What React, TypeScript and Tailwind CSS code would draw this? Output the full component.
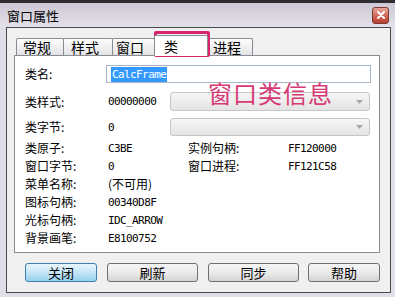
import React from "react";

const Arrow = () => (
  <svg width="7" height="4" viewBox="0 0 7 4" className="absolute right-[6px] top-1/2 -translate-y-1/2">
    <path d="M0 0 H7 L3.5 4 Z" fill="#a8a8a8" />
  </svg>
);

const Combo = () => (
  <div className="relative w-[200px] h-full rounded-[3px] border border-[#c6c6c6] bg-gradient-to-b from-[#f6f6f6] to-[#e4e4e4]">
    <Arrow />
  </div>
);

const mono = "font-['DejaVu_Sans_Mono',monospace] text-[11px] tracking-[-0.6px] leading-none";

const Row = ({ label, value, label2, value2, cjkValue }: { label: string; value: string; label2?: string; value2?: string; cjkValue?: boolean }) => (
  <div className="h-[18px] flex items-center">
    <div className="w-[81px] text-[12px] leading-none">{label}</div>
    <div className={`w-[82px] pl-[2px] ${cjkValue ? "text-[12px] leading-none" : mono}`}>{value}</div>
    {label2 && <div className="w-[100px] text-[12px] leading-none">{label2}</div>}
    {value2 && <div className={mono}>{value2}</div>}
  </div>
);

const Tab = ({ w, pl, children }: { w: string; pl: string; children: React.ReactNode }) => (
  <div className={`${w} ${pl} h-[17px] flex items-center text-[14px] leading-none border border-b-0 border-[#898c95] rounded-t-[2px] bg-gradient-to-b from-[#fdfdfd] to-[#e3e3e3] -mr-px`}>
    {children}
  </div>
);

const Btn = ({ w, ml, children, def }: { w: string; ml?: string; children: React.ReactNode; def?: boolean }) => (
  <div
    className={`${w} ${ml ?? ""} h-[19px] rounded-[3px] border flex items-center justify-center text-[13px] leading-none ${
      def
        ? "border-[#3c7fb1] bg-gradient-to-b from-[#e8f6fd] via-[#c4e5f6] to-[#98d1ef]"
        : "border-[#707070] bg-gradient-to-b from-[#f4f4f4] via-[#ebebeb] to-[#d4d4d4]"
    }`}
  >
    {children}
  </div>
);

export default function App() {
  return (
    <div className="relative w-[395px] h-[297px] overflow-hidden bg-[#e2dee7] flex flex-col font-['Noto_Sans_CJK_SC',sans-serif] text-black">
      <div className="h-[3px] bg-[#2e2c31]" />
      <div className="h-[24px] flex items-center pl-[7px] pr-[6px] bg-gradient-to-b from-[#cdc8d3] to-[#e4e0e9]">
        <span className="text-[13px] leading-none">窗口属性</span>
        <div className="ml-auto w-[17px] h-[17px] rounded-[3px] border border-[#7d3a33] bg-gradient-to-b from-[#e6a89c] via-[#d06a5c] to-[#b83e30] flex items-center justify-center">
          <svg width="8" height="8" viewBox="0 0 8 8">
            <path d="M1 1 L7 7 M7 1 L1 7" stroke="#ffffff" strokeWidth="2" strokeLinecap="round" />
          </svg>
        </div>
      </div>
      <div className="ml-[6px] w-[385px] h-[266px] border border-[#4a4a4a] bg-[#f0f0f0] flex flex-col">
        <div className="mt-[7px] h-[20px] pl-[9px] flex items-end">
          <Tab w="w-[48px]" pl="pl-[6px]">常规</Tab>
          <Tab w="w-[50px]" pl="pl-[7px]">样式</Tab>
          <Tab w="w-[43px]" pl="pl-[3px]">窗口</Tab>
          <div className="relative z-10 w-[54px] h-[21px] -mb-px -mr-px pl-[9px] flex items-center text-[14px] leading-none border border-b-0 border-[#898c95] rounded-t-[2px] bg-white">
            类
          </div>
          <Tab w="w-[46px]" pl="pl-[5px]">进程</Tab>
        </div>
        <div className="ml-[7px] w-[366px] h-[198px] border border-[#898c95] bg-white pt-[9px] pl-[10px] flex flex-col">
          <div className="h-[18px] flex items-center">
            <div className="w-[81px] text-[12px] leading-none">类名:</div>
            <div className="w-[265px] h-full border border-[#a7b6c6] flex items-center pl-[4px]">
              <span className={`bg-[#3399ff] text-white px-[1px] py-[2px] ${mono}`}>CalcFrame</span>
            </div>
          </div>
          <div className="mt-[9px] h-[19px] flex items-center">
            <div className="w-[81px] text-[12px] leading-none">类样式:</div>
            <div className={`w-[64px] pl-[2px] ${mono}`}>00000000</div>
            <Combo />
          </div>
          <div className="mt-[7px] h-[18px] flex items-center">
            <div className="w-[81px] text-[12px] leading-none">类字节:</div>
            <div className={`w-[64px] pl-[2px] ${mono}`}>0</div>
            <Combo />
          </div>
          <div className="mt-[3px]">
            <Row label="类原子:" value="C3BE" label2="实例句柄:" value2="FF120000" />
            <Row label="窗口字节:" value="0" label2="窗口进程:" value2="FF121C58" />
            <Row label="菜单名称:" value="(不可用)" cjkValue />
            <Row label="图标句柄:" value="00340D8F" />
            <Row label="光标句柄:" value="IDC_ARROW" />
            <Row label="背景画笔:" value="E8100752" />
          </div>
        </div>
        <div className="mt-[10px] pl-[18px] flex">
          <Btn w="w-[72px]" def>关闭</Btn>
          <Btn w="w-[91px]" ml="ml-[10px]">刷新</Btn>
          <Btn w="w-[91px]" ml="ml-[10px]">同步</Btn>
          <Btn w="w-[72px]" ml="ml-[9px]">帮助</Btn>
        </div>
      </div>
      <div className="absolute left-[154px] top-[31px] w-[56px] h-[26px] border-[3px] border-[#d7246c] rounded-[2px] pointer-events-none" />
      <div className="absolute left-[208px] top-[81px] text-[24px] leading-none tracking-[1px] text-[#d63a74]">窗口类信息</div>
    </div>
  );
}
